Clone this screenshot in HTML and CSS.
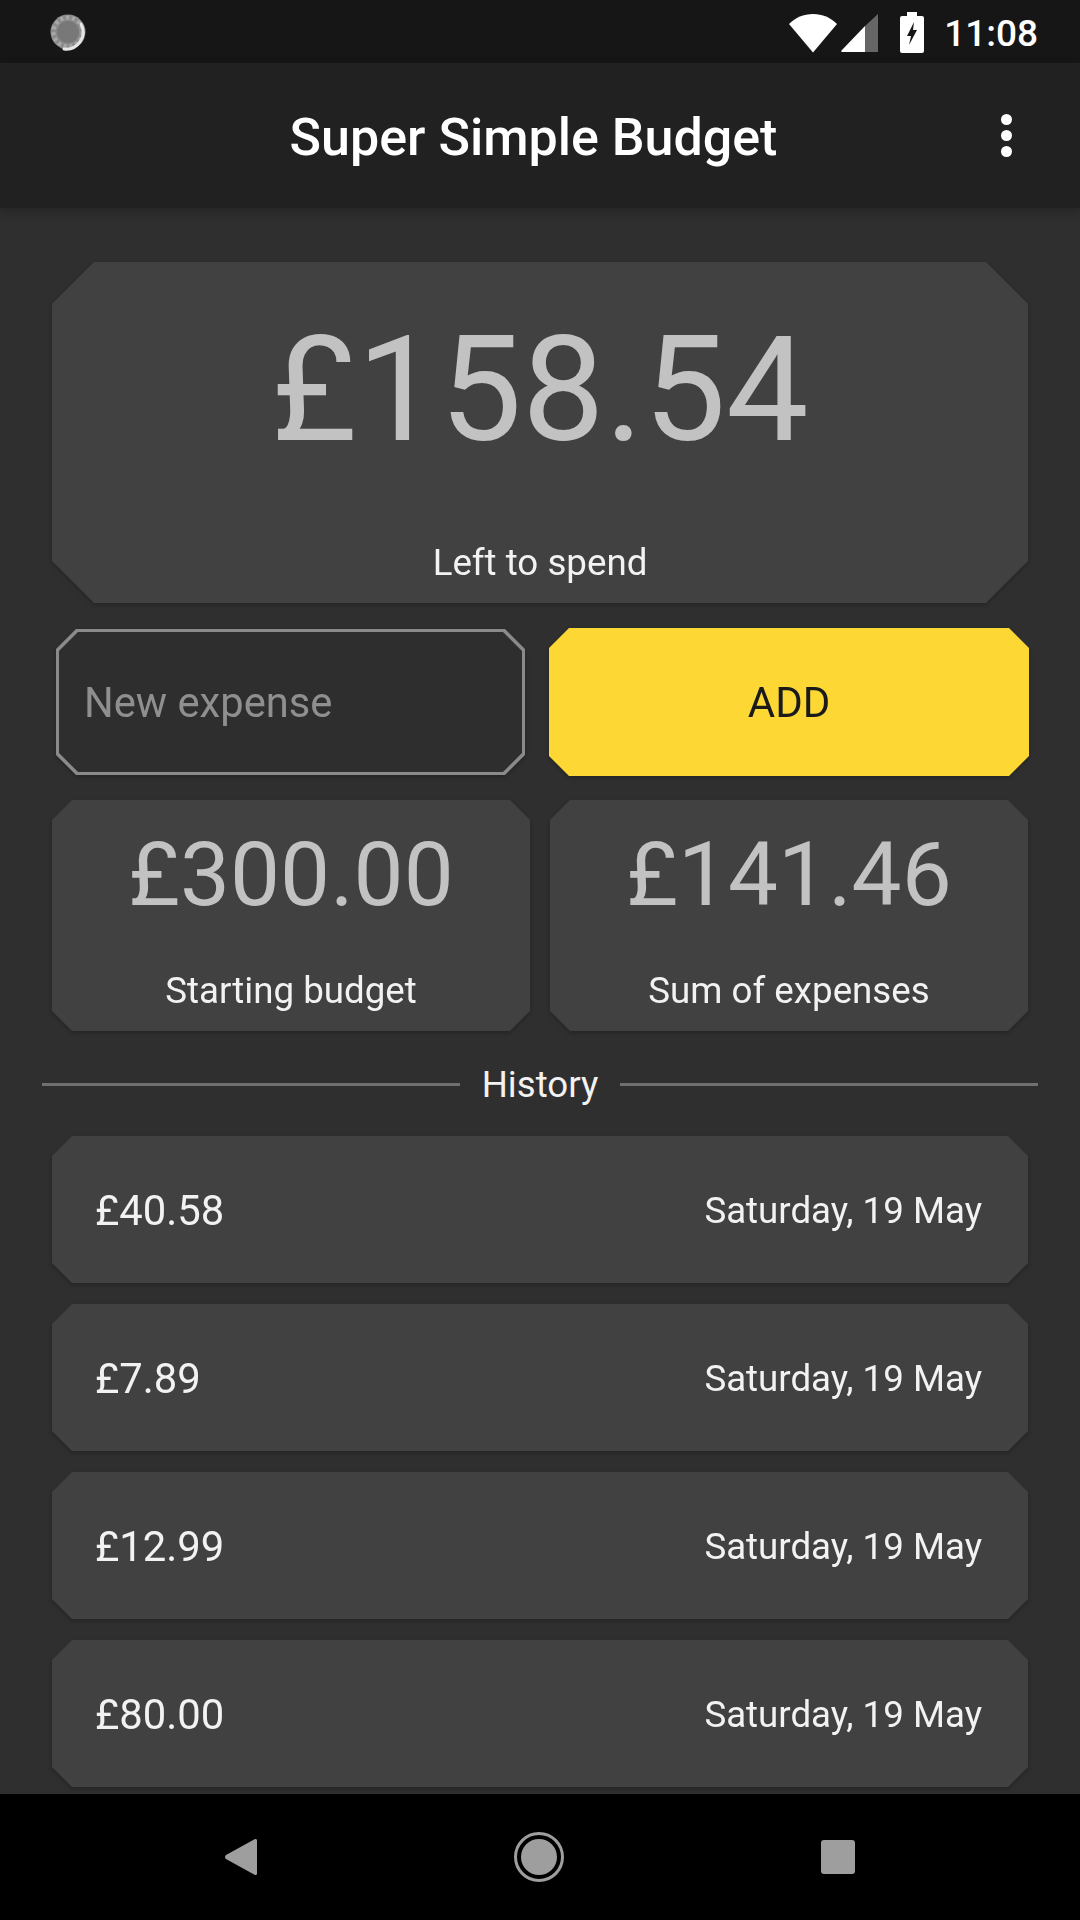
FILE: index.html
```html
<!DOCTYPE html>
<html lang="en">
<head>
<meta charset="utf-8">
<title>Super Simple Budget</title>
<link rel="stylesheet" href="styles.css">
</head>
<body>
<div class="screen">
  <div class="statusbar">
    <svg class="notif" width="40" height="40" viewBox="0 0 40 40">
      <circle cx="20" cy="20" r="17.5" fill="#8c8c8c"/>
      <circle cx="20" cy="20" r="14.5" fill="none" stroke="#a8a8a8" stroke-width="4" stroke-dasharray="3 3"/>
      <circle cx="20" cy="20" r="11" fill="#787878"/>
      <path d="M33 12a17 17 0 0 1-17 25" fill="none" stroke="#e6e6e6" stroke-width="3" stroke-linecap="round"/>
    </svg>
    <div class="status-right">
      <svg class="wifi" width="50" height="40" viewBox="0 0 50 40"><path d="M25 39.500 1 11C7.500 4.500 15.500 1 25 1s17.500 3.500 24 10z" fill="#fff"/></svg>
      <svg class="signal" width="38" height="38" viewBox="0 0 38 38"><path d="M24 12 37 0v38H24z" fill="#666"/><path d="M24 12v26H1a1 1 0 0 1-.5-1.500z" fill="#fff"/></svg>
      <svg class="battery" width="24" height="41" viewBox="0 0 24 41"><path d="M7 0h10v4h5a2 2 0 0 1 2 2v33a2 2 0 0 1-2 2H2a2 2 0 0 1-2-2V6a2 2 0 0 1 2-2h5z" fill="#fff"/><path d="M14 10 7 24h4l-2 9 8-15h-4z" fill="#161616"/></svg>
      <span class="time">11:08</span>
    </div>
  </div>
  <header class="appbar">
    <h1 class="title">Super Simple Budget</h1>
    <div class="menu"><i class="dot"></i><i class="dot"></i><i class="dot"></i></div>
  </header>
  <main class="content">
    <div class="shadowed">
      <section class="card card-main">
        <div class="amount amount-big">£158.54</div>
        <div class="label">Left to spend</div>
      </section>
    </div>
    <div class="grid shadowed">
      <div class="input-frame"><div class="input-inner">New expense</div></div>
      <div class="add-btn">ADD</div>
      <section class="card card-small">
        <div class="amount amount-mid">£300.00</div>
        <div class="label">Starting budget</div>
      </section>
      <section class="card card-small">
        <div class="amount amount-mid">£141.46</div>
        <div class="label">Sum of expenses</div>
      </section>
    </div>
    <div class="divider"><span class="rule"></span><span class="divider-text">History</span><span class="rule"></span></div>
    <div class="history shadowed">
      <div class="row"><span class="row-amount">£40.58</span><span class="row-date">Saturday, 19 May</span></div>
      <div class="row"><span class="row-amount">£7.89</span><span class="row-date">Saturday, 19 May</span></div>
      <div class="row"><span class="row-amount">£12.99</span><span class="row-date">Saturday, 19 May</span></div>
      <div class="row"><span class="row-amount">£80.00</span><span class="row-date">Saturday, 19 May</span></div>
    </div>
  </main>
  <nav class="navbar">
    <svg class="nav-back" width="32" height="36" viewBox="0 0 32 36"><path d="M30 0a1.500 1.500 0 0 1 2 1.500v33a1.500 1.500 0 0 1-2 1.500L1 20a2.500 2.500 0 0 1 0-4z" fill="#9e9e9e"/></svg>
    <svg class="nav-home" width="50" height="50" viewBox="0 0 50 50"><circle cx="25" cy="25" r="23.500" fill="none" stroke="#9e9e9e" stroke-width="3"/><circle cx="25" cy="25" r="18" fill="#9e9e9e"/></svg>
    <div class="nav-recent"></div>
  </nav>
</div>
</body>
</html>
```
FILE: styles.css
```css
* { box-sizing: border-box; }
html, body { margin: 0; padding: 0; background: #2f2f2f; }
body { font-family: Roboto, "Liberation Sans", sans-serif; }
.screen { width: 1080px; height: 1920px; display: flex; flex-direction: column; overflow: hidden; background: #2f2f2f; }

.statusbar { height: 63px; flex: none; background: #161616; display: flex; align-items: center; justify-content: space-between; padding: 0 42px 0 48px; }
.status-right { display: flex; align-items: center; padding-top: 2px; }
.wifi { margin-right: 3px; }
.signal { margin-right: 21px; }
.battery { margin-right: 20px; }
.time { color: #fff; font-size: 37px; font-weight: 500; line-height: 1; padding-top: 1px; }

.appbar { height: 145px; flex: none; background: #212121; display: flex; align-items: center; padding: 0 68px 0 67px; box-shadow: 0 4px 10px rgba(0,0,0,.22); position: relative; z-index: 1; }
.title { flex: 1; margin: 0; padding-top: 5px; text-align: center; color: #fff; font-size: 52px; font-weight: 500; line-height: 60px; }
.menu { width: 12px; display: flex; flex-direction: column; align-items: center; gap: 5px; }
.dot { width: 11px; height: 11px; border-radius: 50%; background: #fff; display: block; }

.content { flex: 1; min-height: 0; overflow: hidden; padding: 54px 52px 0; }
.shadowed { filter: drop-shadow(0 2px 2px rgba(0,0,0,.22)); }

.card { background: #414141; display: flex; flex-direction: column; justify-content: space-between; align-items: center; }
.card-main { height: 341px; padding: 55px 0 20px; clip-path: polygon(42px 0, calc(100% - 42px) 0, 100% 42px, 100% calc(100% - 42px), calc(100% - 42px) 100%, 42px 100%, 0 calc(100% - 42px), 0 42px); }
.card-small { height: 231px; padding: 30px 0 20px; clip-path: polygon(20px 0, calc(100% - 20px) 0, 100% 20px, 100% calc(100% - 20px), calc(100% - 20px) 100%, 20px 100%, 0 calc(100% - 20px), 0 20px); }
.amount { color: #c2c2c2; }
.amount-big { font-size: 147px; line-height: 146px; }
.amount-mid { font-size: 89px; line-height: 90px; }
.label { color: #f2f2f2; font-size: 36.7px; line-height: 40px; }

.grid { display: grid; grid-template-columns: 1fr 1fr; column-gap: 20px; row-gap: 24px; margin-top: 25px; }
.input-frame { margin: 1px 5px 1px 4px; padding: 3px; background: #8a8a8a; clip-path: polygon(20px 0, calc(100% - 20px) 0, 100% 20px, 100% calc(100% - 20px), calc(100% - 20px) 100%, 20px 100%, 0 calc(100% - 20px), 0 20px); }
.input-inner { height: 140px; background: #2e2e2e; display: flex; align-items: center; padding-left: 25px; color: #8f8f8f; font-size: 41.7px; clip-path: polygon(19px 0, calc(100% - 19px) 0, 100% 19px, 100% calc(100% - 19px), calc(100% - 19px) 100%, 19px 100%, 0 calc(100% - 19px), 0 19px); }
.add-btn { height: 148px; margin: 0 -1px; background: #fdd835; color: #1a1a1a; display: flex; align-items: center; justify-content: center; font-size: 42px; clip-path: polygon(20px 0, calc(100% - 20px) 0, 100% 20px, 100% calc(100% - 20px), calc(100% - 20px) 100%, 20px 100%, 0 calc(100% - 20px), 0 20px); }

.divider { height: 40px; margin: 33px -10px 32px; display: flex; align-items: center; gap: 22px; }
.rule { flex: 1; height: 3px; background: #707070; }
.divider-text { color: #f2f2f2; font-size: 36.7px; line-height: 40px; padding-top: 1px; }

.history { display: flex; flex-direction: column; gap: 21px; }
.row { height: 147px; flex: none; background: #414141; display: flex; align-items: center; justify-content: space-between; padding: 2px 46px 0 43px; color: #f2f2f2; clip-path: polygon(20px 0, calc(100% - 20px) 0, 100% 20px, 100% calc(100% - 20px), calc(100% - 20px) 100%, 20px 100%, 0 calc(100% - 20px), 0 20px); }
.row-amount { font-size: 41.8px; }
.row-date { font-size: 36.7px; }

.navbar { height: 126px; flex: none; background: #000; display: flex; align-items: center; padding: 0 225px 0 225px; justify-content: space-between; position: relative; z-index: 1; }
.nav-recent { width: 34px; height: 34px; border-radius: 3px; background: #9e9e9e; }
```
